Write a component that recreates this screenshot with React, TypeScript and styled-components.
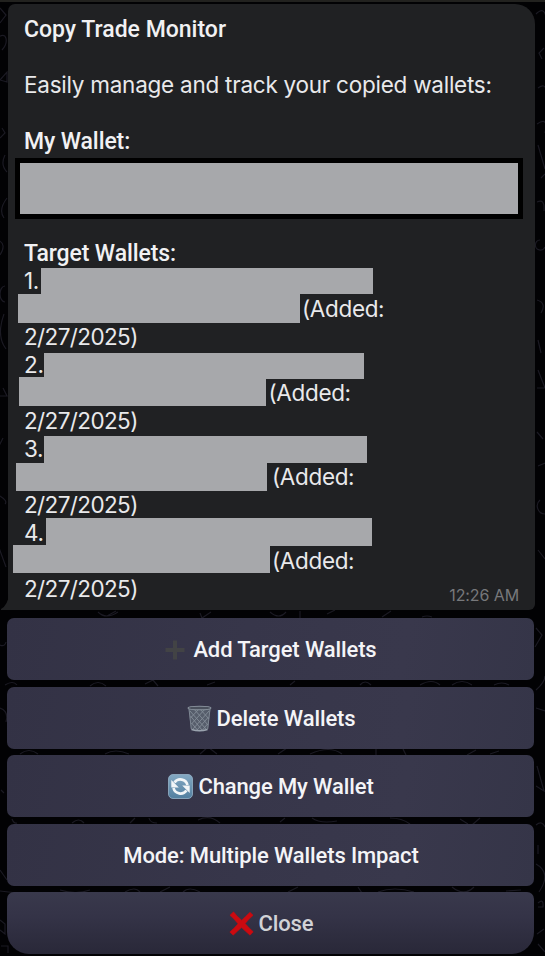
import React from 'react';
import styled, { createGlobalStyle } from 'styled-components';

const GlobalStyle = createGlobalStyle`
  * { box-sizing: border-box; }
  body { margin: 0; background: #020204; overflow: hidden; }
`;

const Screen = styled.main`
  position: relative;
  width: 545px;
  height: 956px;
  overflow: hidden;
  border-top: 2px solid #22221f;
  background: #020204;
  padding: 2px 11px 0 7px;
  font-family: Roboto, sans-serif;
`;

const Wallpaper = styled.svg`
  position: absolute;
  inset: -2px 0 0 0;
  width: 545px;
  height: 956px;
  fill: none;
  stroke: #1b1a23;
  stroke-width: 1.2;
`;

const Bubble = styled.section`
  position: relative;
  height: 606px;
  margin: 0 -1px 0 1px;
  padding: 11px 17px 0 16px;
  border-radius: 7px 20px 6px 0;
  background: #202123;
`;

const Tail = styled.svg`
  position: absolute;
  left: -8px;
  bottom: 0;
  width: 9px;
  height: 16px;
`;

const Heading = styled.h2<{ $track?: number }>`
  margin: 0;
  height: 28px;
  padding-top: 1px;
  font: 500 23px/28px Roboto, sans-serif;
  letter-spacing: ${(p) => p.$track ?? 0}px;
  color: #f1f1f3;
  white-space: nowrap;
`;

const Line = styled.div<{ $indent?: number; $track?: number }>`
  position: relative;
  height: 28px;
  padding-left: ${(p) => p.$indent ?? 0}px;
  font: 400 22.5px/28px Inter, sans-serif;
  letter-spacing: ${(p) => p.$track ?? 0}px;
  color: #e9e9eb;
  white-space: nowrap;
`;

const Gap = styled.div`
  height: 28px;
`;

const OwnWallet = styled.div`
  width: 508px;
  height: 61px;
  margin: 3px 0 20px -9px;
  border: 5px solid #000;
  background: #a7a8ab;
`;

const Redaction = styled.span<{ $x: number; $y: number; $w: number; $h: number }>`
  position: absolute;
  left: ${(p) => p.$x}px;
  top: ${(p) => p.$y}px;
  width: ${(p) => p.$w}px;
  height: ${(p) => p.$h}px;
  background: #a7a8ab;
`;

const Time = styled.time`
  position: absolute;
  right: 16px;
  bottom: 5px;
  font: 400 16px/20px Inter, sans-serif;
  letter-spacing: -0.1px;
  color: #77787b;
`;

const Keyboard = styled.nav`
  position: relative;
  display: grid;
  grid-auto-rows: 62px;
  row-gap: 6.6px;
  margin-top: 8px;
`;

const Key = styled.button<{ $last?: boolean; $gap?: number }>`
  display: flex;
  align-items: center;
  justify-content: center;
  gap: ${(p) => p.$gap ?? 5}px;
  padding: 1px 0 0 1px;
  border: 0;
  border-radius: ${(p) => (p.$last ? '7px 7px 22px 22px' : '7px')};
  background: ${(p) =>
    p.$last
      ? 'linear-gradient(180deg, #39394c 0%, #343347 40%, #292838 100%)'
      : 'linear-gradient(100deg, #333245 0%, #37364a 45%, #39384c 75%, #353548 100%)'};
  color: ${(p) => (p.$last ? '#d2d2d6' : '#f4f4f7')};
  font: 500 22px/28px Roboto, sans-serif;
  letter-spacing: -0.12px;
  white-space: nowrap;

  svg { flex: none; }
`;

const Label = styled.span`
  padding-top: 1px;
`;

const PlusIcon = () => (
  <svg width="20" height="20" viewBox="0 0 20 20">
    <path d="M10 .5v19M.5 10h19" stroke="#424345" strokeWidth="4" />
  </svg>
);

const TrashIcon = () => (
  <svg width="25" height="27" viewBox="0 0 25 27">
    <path d="M1.5 3 4 24.5Q12.5 28 21 24.5L23.5 3Z" fill="#565d6b" />
    <path
      d="M3 6 19 24M7 4l14 16M13 4l9 10M3.5 11 15 25M4.5 18l6 7M22 6 6 24M18 4 4.5 19M12 4 3.5 13M21.5 12 10 25M20.5 19l-5 6"
      stroke="#858d99" strokeWidth=".9" fill="none"
    />
    <path d="m2 4 2.3 20M23 4l-2.3 20" stroke="#7d8692" strokeWidth="1" />
    <ellipse cx="12.5" cy="3" rx="11.5" ry="1.8" fill="#4a505c" stroke="#89929d" strokeWidth="1.1" />
    <path d="M4.5 24.5q8 2.5 16 0" stroke="#9aa3ae" strokeWidth="1.4" fill="none" />
  </svg>
);

const RefreshIcon = () => (
  <svg width="25" height="25" viewBox="0 0 25 25">
    <defs>
      <linearGradient id="tile" x1="0" y1="0" x2="0" y2="1">
        <stop offset="0" stopColor="#84a9c3" />
        <stop offset="1" stopColor="#527f9f" />
      </linearGradient>
    </defs>
    <rect x=".5" y=".5" width="24" height="24" rx="4.5" fill="url(#tile)" stroke="#96b4c9" strokeWidth=".8" />
    <path d="M6.500 8.500A7.300 7.300 0 0 1 19.500 11M18.500 16.500A7.300 7.300 0 0 1 5.500 14" fill="none" stroke="#f1f5f7" strokeWidth="2.7" />
    <path d="M3.300 6v7.500h7.500ZM21.700 19v-7.500h-7.500Z" fill="#f1f5f7" />
  </svg>
);

const CrossIcon = () => (
  <svg width="25" height="25" viewBox="0 0 25 25">
    <path
      d="M4.500 .8Q8.500 6 12.700 9.200 16.500 5.400 21 1.200L24.200 4.300Q19.500 8.300 16.200 12.600 19.600 16.600 24.300 20.800L21 24.200Q16.400 20.300 12.500 16.600 8.600 20.200 4.200 24.200L.8 21Q5.500 17 9 12.800 5.600 8.300 .9 4.300Z"
      fill="#cb0a10" stroke="#cb0a10" strokeWidth=".5"
    />
  </svg>
);

const wallets = [
  { n: '1.', a: [17, 1, 332, 26], b: [-6, -1, 282, 29], indent: 278 },
  { n: '2.', a: [20, 2, 320, 26], b: [-5, -2, 246.5, 29], indent: 244.5 },
  { n: '3.', a: [20, 1, 322.5, 27], b: [-8.5, 0, 251.5, 28], indent: 248 },
  { n: '4.', a: [22, -1, 325.5, 28], b: [-11.5, -2, 257.5, 28], indent: 248 },
];

const doodles = [
  'M0 8l6 7-6 8M-3 38c10-8 12 4 5 12M0 80l7-8v10zM2 128l3 5-5 5M5 155q-5 10 2 17M4 218q-6-8 3-20',
  'M536 14q8-8 10 3M544 48l-5 5 3 6M538 88q7-5 8 2M537 124q12-8 8 9M538 145l7 24M541 178l4-4M537 202q8-4 7 9',
  'M-2 240q9 4 2 15M5 286a5 8 0 0 0 0 16M4 314q-8 22 2 35M3 388l4 8H0M3 438l-4 8M0 496q8 5 5 8M-2 545l8 22',
  'M540 240a5 5 0 1 0 5 7M537 300q10 3 4 13M538 340l3 13M538 370l7 18h-8M537 432l6 7M538 466l7-3M540 500a8 8 0 0 0 5 14M538 550l7 9',
  'M98 612q8 8 20 0M107 616l9-5M200 613l2 5 9-6M270 612q9 8 16 0M300 611v7M327 614l8-4M382 617l9-6M422 617q5-2 10 0',
  'M5 685q8-5 12 0M90 686q8-7 16 0M145 684l8-4 5 6M207 685l8-3M290 685l5-4M360 685q5-6 11 0M420 685q12-7 20 0M452 685q10-7 20 0M494 685q8-4 15 0',
  'M20 754q9-7 18 0M105 754q10-6 24 0M200 754l8-7 9 7M278 754l9-6M310 754q20-9 32 0M376 748v7M403 749l3 6M467 755l9-5M490 754l9-3',
  'M12 819q2 5 5 4M72 823q7-6 12 0M130 823l5-5M149 818q1 5 8 5M198 820q12-6 22 3M280 822l5-4M312 818q8 6 25 3M390 818q12 0 20 6M460 819l8 5M480 818l-8 7',
  'M0 891l17 2M60 890q16 5 30 0M125 892q10-6 15 0M160 892l10-5M183 892q6-6 17 0M288 892l10-5M358 887l4 6M378 892q16-6 36 0M452 887q12 10 22 0M506 891l15-1',
  'M0 645q5 2 6-3M0 708q9 3 6 14M1 790l3 3M0 870l7 10M0 920l5 4v10l-5-4M1 946h7v7',
  'M536 628l6 7-7 12M536 690q9-8 9-14M536 708l9 3M537 766l7 25-8-5M536 825q6-5 9 2M538 845v9M536 864q16 9 3 28M538 903q6-5 5 4h-5M537 934l7-5M538 944l7 8',
];

export default function App() {
  return (
    <>
      <GlobalStyle />
      <Screen>
        <Wallpaper viewBox="0 0 545 956" aria-hidden>
          {doodles.map((d) => <path key={d} d={d} />)}
        </Wallpaper>
        <Bubble>
          <Tail viewBox="0 0 9 16"><path d="M9 0Q8 11 1 15v1h8Z" fill="#202123" /></Tail>
          <Heading>Copy Trade Monitor</Heading>
          <Gap />
          <Line $track={-0.25}>Easily manage and track your copied wallets:</Line>
          <Gap />
          <Heading $track={-0.1}>My Wallet:</Heading>
          <OwnWallet />
          <Heading $track={-0.1}>Target Wallets:</Heading>
          {wallets.map(({ n, a, b, indent }) => (
            <React.Fragment key={n}>
              <Line $track={-0.3}>{n}<Redaction $x={a[0]} $y={a[1]} $w={a[2]} $h={a[3]} /></Line>
              <Line $indent={indent} $track={-0.35}>
                <Redaction $x={b[0]} $y={b[1]} $w={b[2]} $h={b[3]} />(Added:
              </Line>
              <Line $track={-0.62}>2/27/2025)</Line>
            </React.Fragment>
          ))}
          <Time>12:26 AM</Time>
        </Bubble>
        <Keyboard>
          <Key $gap={8}><PlusIcon /><Label>Add Target Wallets</Label></Key>
          <Key><TrashIcon /><Label>Delete Wallets</Label></Key>
          <Key><RefreshIcon /><Label>Change My Wallet</Label></Key>
          <Key><Label>Mode: Multiple Wallets Impact</Label></Key>
          <Key $last><CrossIcon /><Label>Close</Label></Key>
        </Keyboard>
      </Screen>
    </>
  );
}
